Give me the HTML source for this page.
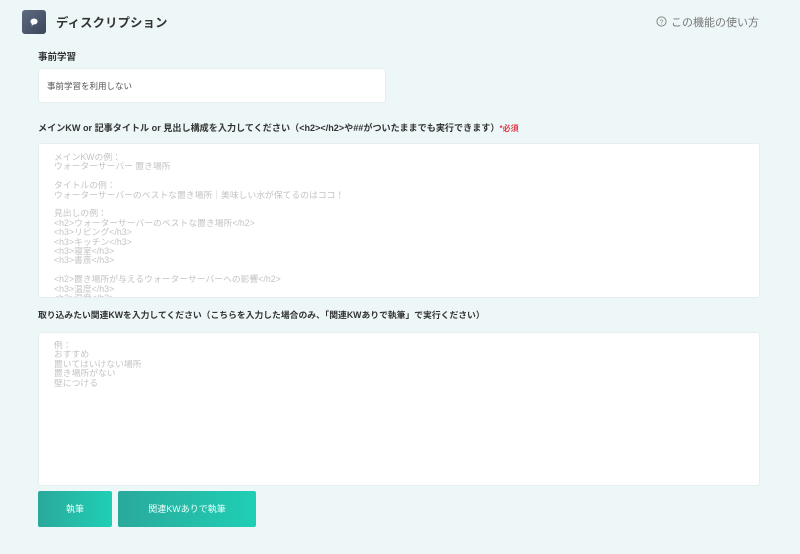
<!DOCTYPE html>
<html><head><meta charset="utf-8"><style>
*{margin:0;padding:0;box-sizing:border-box}
body{width:800px;height:554px;background:#eef7f8;font-family:"Liberation Sans","Noto Sans CJK JP",sans-serif;position:relative;overflow:hidden;color:#333}
.abs{position:absolute}
.icon{left:22px;top:10px;width:24px;height:24px;border-radius:3px;background:linear-gradient(135deg,#5d6b82,#3b465a)}
.title{left:56px;top:13px;font-size:12.3px;color:#333;font-weight:bold;letter-spacing:.2px}
.help{left:656px;top:14px;font-size:11px;color:#777}
.lbl{font-size:9px;font-weight:bold;color:#333}
.box{background:#fff;border-radius:3px;border:1px solid #e6eef0}
.ph{font-size:8.8px;line-height:9.4px;color:#c4c4c4;white-space:pre}
.btn{top:491px;height:36px;border-radius:2px;background:linear-gradient(90deg,#2aa99b,#1fcfb5);color:#e8fffb;font-size:9px;text-align:center;line-height:36px}
</style></head><body>
<div class="abs icon"><svg width="24" height="24"><ellipse cx="12" cy="11.5" rx="3.6" ry="3" fill="#fff"/><path d="M10 13.5 L9.5 16 L12 14 Z" fill="#fff"/></svg></div>
<div class="abs title">ディスクリプション</div>
<div class="abs help"><svg width="11" height="11" style="vertical-align:-1px;margin-right:4px"><circle cx="5.5" cy="5.5" r="4.6" fill="none" stroke="#888" stroke-width="1"/><text x="5.5" y="8.3" font-size="7" text-anchor="middle" fill="#888" font-family="Liberation Sans">?</text></svg>この機能の使い方</div>
<div class="abs lbl" style="left:38px;top:49px;font-size:9.5px">事前学習</div>
<div class="abs box" style="left:38px;top:68px;width:348px;height:35px"></div>
<div class="abs" style="left:47px;top:80px;font-size:8.5px;color:#555">事前学習を利用しない</div>
<div class="abs lbl" style="left:38px;top:120px;font-size:9.1px">メインKW or 記事タイトル or 見出し構成を入力してください（&lt;h2&gt;&lt;/h2&gt;や##がついたままでも実行できます）<span style="color:#e03a4a;font-size:8px">*必須</span></div>
<div class="abs box" style="left:38px;top:143px;width:722px;height:155px;overflow:hidden">
<div class="ph" style="margin:9px 0 0 15px">メインKWの例：
ウォーターサーバー 置き場所

タイトルの例：
ウォーターサーバーのベストな置き場所｜美味しい水が保てるのはココ！

見出しの例：
&lt;h2&gt;ウォーターサーバーのベストな置き場所&lt;/h2&gt;
&lt;h3&gt;リビング&lt;/h3&gt;
&lt;h3&gt;キッチン&lt;/h3&gt;
&lt;h3&gt;寝室&lt;/h3&gt;
&lt;h3&gt;書斎&lt;/h3&gt;

&lt;h2&gt;置き場所が与えるウォーターサーバーへの影響&lt;/h2&gt;
&lt;h3&gt;温度&lt;/h3&gt;
&lt;h3&gt;湿度&lt;/h3&gt;
&lt;h3&gt;日光&lt;/h3&gt;</div></div>
<div class="abs lbl" style="left:38px;top:308px;font-size:8.8px">取り込みたい関連KWを入力してください（こちらを入力した場合のみ、「関連KWありで執筆」で実行ください）</div>
<div class="abs box" style="left:38px;top:332px;width:722px;height:154px">
<div class="ph" style="margin:8px 0 0 15px">例：
おすすめ
置いてはいけない場所
置き場所がない
壁につける</div></div>
<div class="abs btn" style="left:38px;width:74px">執筆</div>
<div class="abs btn" style="left:118px;width:138px">関連KWありで執筆</div>
</body></html>
